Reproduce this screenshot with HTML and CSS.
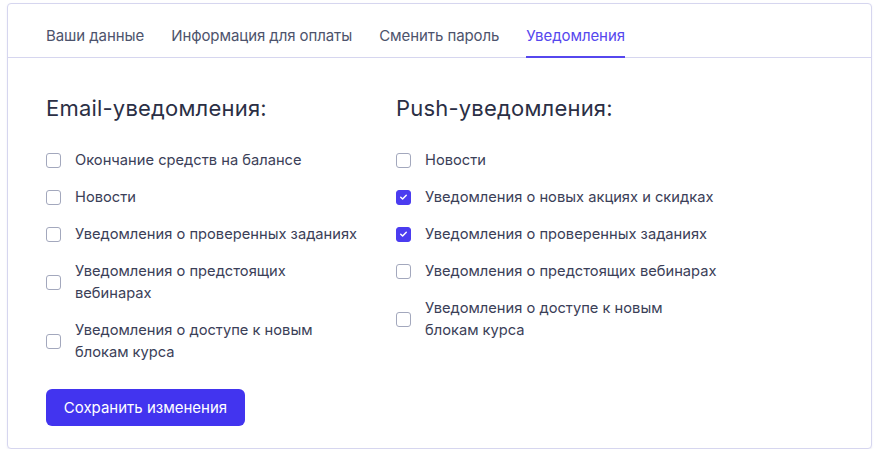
FILE: index.html
```html
<!DOCTYPE html>
<html lang="ru">
<head>
<meta charset="utf-8">
<link rel="stylesheet" href="styles.css">
</head>
<body>
<div class="card">
  <nav class="tabs">
    <a class="tab">Ваши данные</a>
    <a class="tab">Информация для оплаты</a>
    <a class="tab">Сменить пароль</a>
    <a class="tab tab--active">Уведомления</a>
  </nav>
  <div class="content">
    <div class="columns">
      <section class="col col--left">
        <h2 class="heading">Email-уведомления:</h2>
        <ul class="list">
          <li class="item"><span class="box"></span><span class="label">Окончание средств на балансе</span></li>
          <li class="item"><span class="box"></span><span class="label">Новости</span></li>
          <li class="item"><span class="box"></span><span class="label">Уведомления о проверенных заданиях</span></li>
          <li class="item"><span class="box"></span><span class="label">Уведомления о предстоящих вебинарах</span></li>
          <li class="item"><span class="box"></span><span class="label">Уведомления о доступе к новым блокам курса</span></li>
        </ul>
      </section>
      <section class="col col--right">
        <h2 class="heading">Push-уведомления:</h2>
        <ul class="list">
          <li class="item"><span class="box"></span><span class="label">Новости</span></li>
          <li class="item"><span class="box box--checked"><svg viewBox="0 0 16 16" width="16" height="16"><path d="M4.6 8.2l2.3 2.2 4.5-4.6" fill="none" stroke="#fff" stroke-width="1.8" stroke-linecap="round" stroke-linejoin="round"/></svg></span><span class="label">Уведомления о новых акциях и скидках</span></li>
          <li class="item"><span class="box box--checked"><svg viewBox="0 0 16 16" width="16" height="16"><path d="M4.6 8.2l2.3 2.2 4.5-4.6" fill="none" stroke="#fff" stroke-width="1.8" stroke-linecap="round" stroke-linejoin="round"/></svg></span><span class="label">Уведомления о проверенных заданиях</span></li>
          <li class="item"><span class="box"></span><span class="label">Уведомления о предстоящих вебинарах</span></li>
          <li class="item"><span class="box"></span><span class="label">Уведомления о доступе к новым блокам курса</span></li>
        </ul>
      </section>
    </div>
    <button class="btn" type="button">Сохранить изменения</button>
  </div>
</div>
</body>
</html>
```
FILE: styles.css
```css
* { box-sizing: border-box; }
html, body { margin: 0; padding: 0; background: #ffffff; }
body {
  font-family: Inter, "Noto Sans", "Liberation Sans", sans-serif;
  color: #3b4058;
}
.card {
  margin: 3px 0 0 7px;
  width: 865px;
  height: 446px;
  border: 1px solid #d6d6ef;
  border-radius: 4px;
  background: #fff;
  box-shadow: 0 1px 2px rgba(120, 120, 200, 0.12);
}
.tabs {
  display: flex;
  gap: 27px;
  padding: 0 38px;
  border-bottom: 1px solid #d6d6ef;
  height: 54px;
}
.tab {
  display: block;
  font-size: 15px;
  letter-spacing: -0.08px;
  line-height: 20px;
  padding-top: 22px;
  color: #4d536c;
  border-bottom: 2px solid transparent;
  margin-bottom: -1px;
  cursor: pointer;
}
.tab--active {
  color: #5647ee;
  border-bottom-color: #5647ee;
}
.content {
  padding: 35px 38px 0;
}
.columns {
  display: grid;
  grid-template-columns: 350px 1fr;
}
.heading {
  margin: 0 0 26px;
  font-size: 22px;
  line-height: 30px;
  font-weight: 400;
  color: #2b2f45;
  letter-spacing: 0.2px;
}
.list {
  list-style: none;
  margin: 0;
  padding: 0;
  display: flex;
  flex-direction: column;
  gap: 15px;
}
.item {
  display: flex;
  align-items: center;
  gap: 14px;
  font-size: 14.7px;
  line-height: 22px;
}
.col--left .label { max-width: 288px; }
.col--right .label { max-width: 294px; }
.box {
  flex: 0 0 auto;
  width: 15px;
  height: 15px;
  border: 1px solid #a3a8bd;
  border-radius: 3px;
  background: #fff;
  display: flex;
  align-items: center;
  justify-content: center;
}
.box svg { width: 14px; height: 14px; }
.box--checked {
  background: #4b3cf0;
  border-color: #4b3cf0;
}
.btn {
  margin-top: 26px;
  width: 199px;
  height: 37px;
  border: 0;
  border-radius: 6px;
  background: #4234ef;
  color: #fff;
  font-family: Inter, "Noto Sans", sans-serif;
  font-size: 15px;
  padding: 0;
  cursor: pointer;
}
```
